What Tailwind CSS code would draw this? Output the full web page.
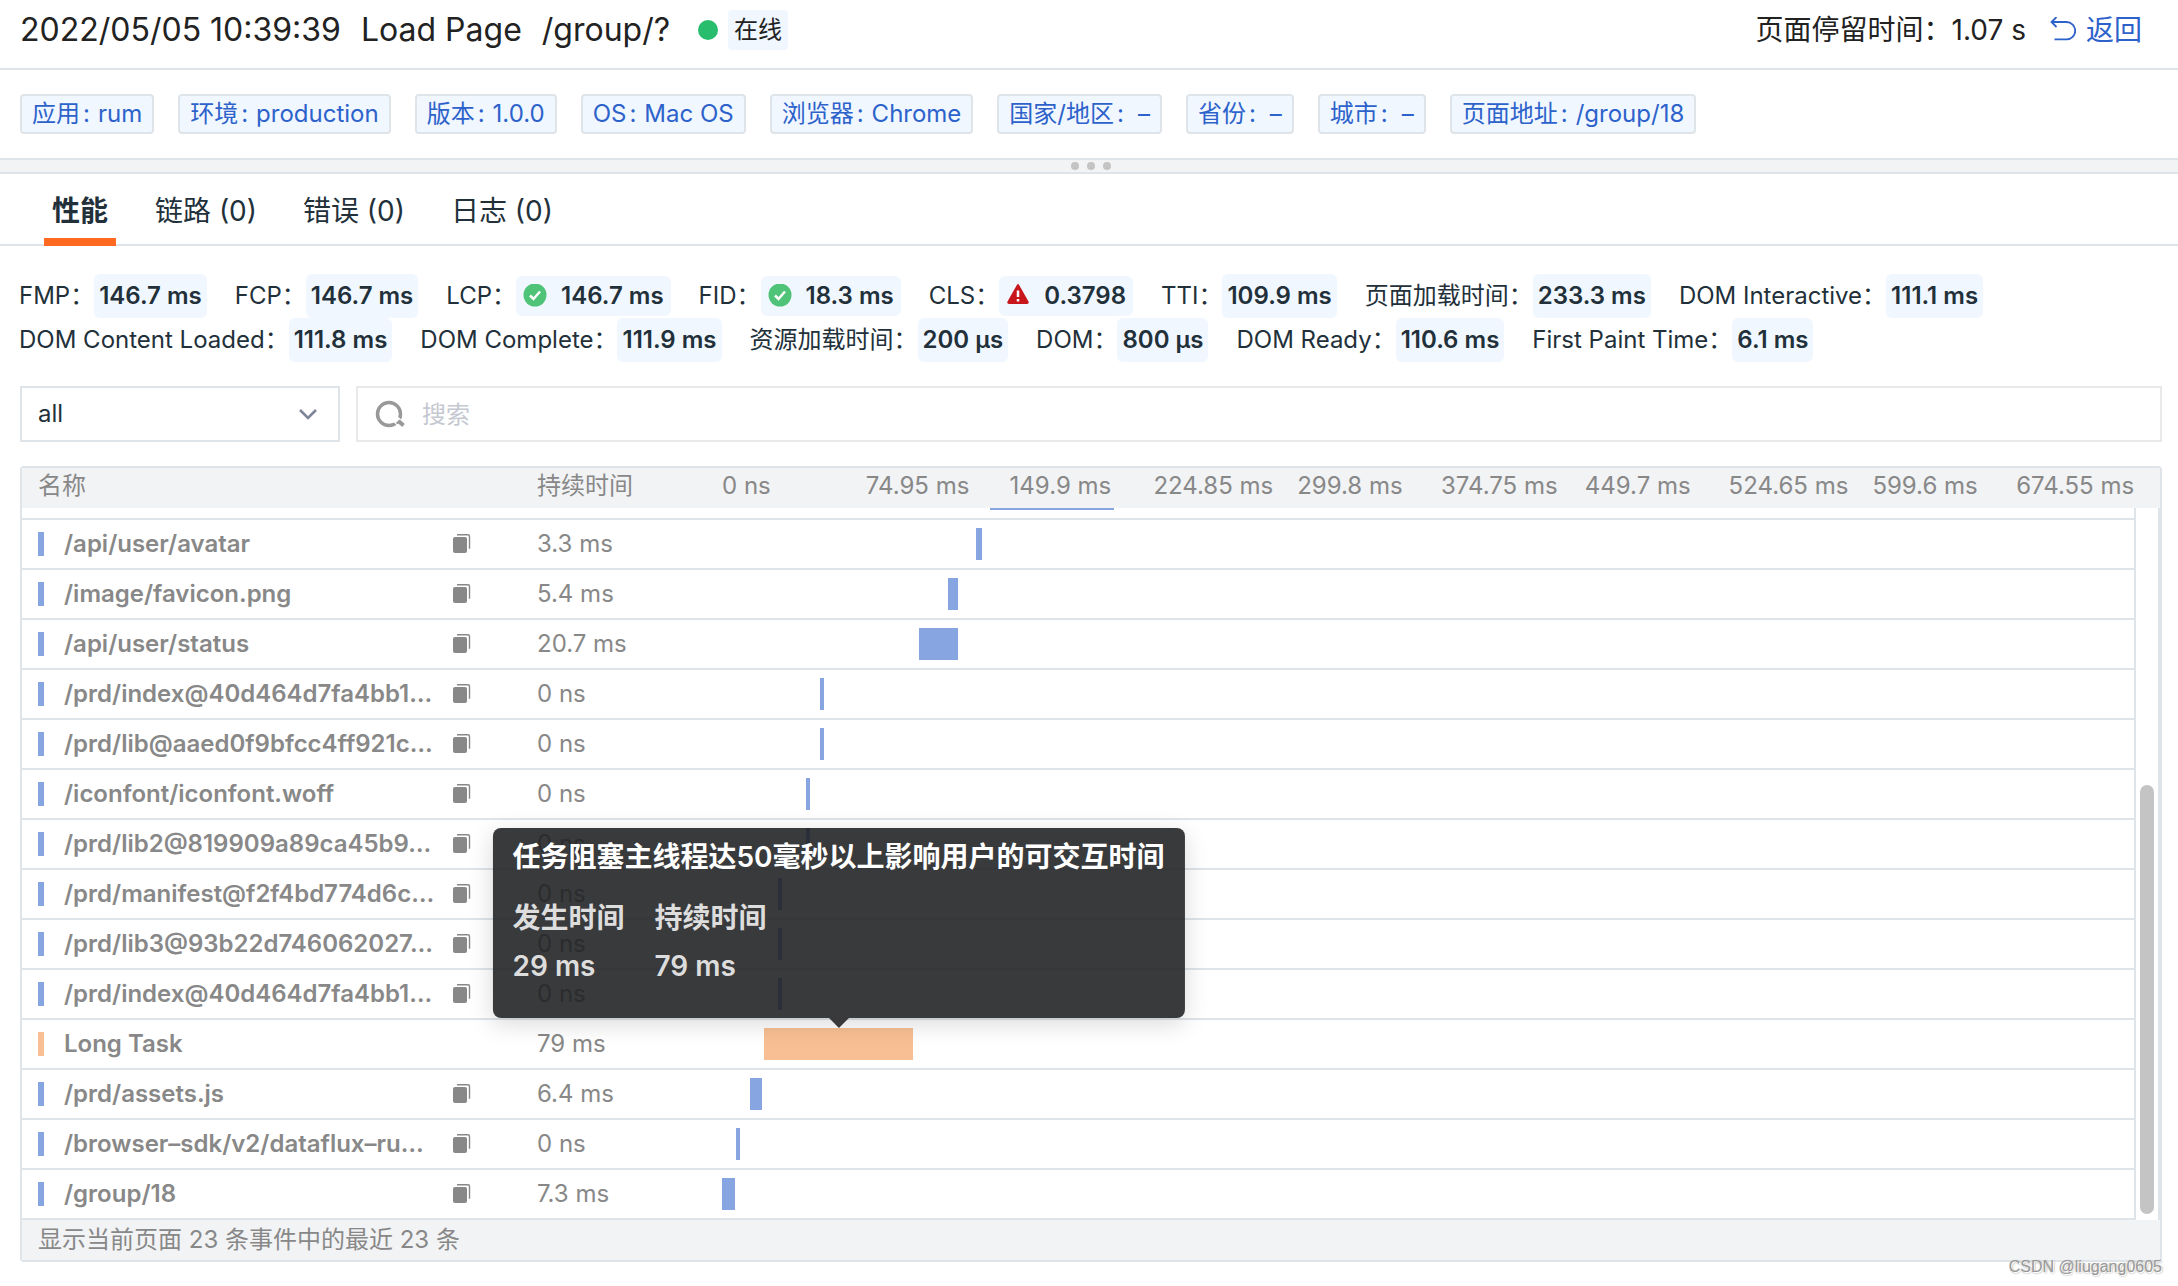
<!DOCTYPE html>
<html lang="zh">
<head>
<meta charset="utf-8">
<meta name="viewport" content="width=device-width, initial-scale=1">
<title>Load Page /group/?</title>
<script src="https://cdn.jsdelivr.net/npm/@tailwindcss/browser@4"></script>
</head>
<body class="min-h-screen bg-white font-[Inter,'Noto_Sans_CJK_SC',sans-serif] text-[24px] leading-8 text-[#22303a]">

<header class="flex h-[70px] items-center justify-between border-b-2 border-[#dfe4e9] pb-2 pr-9 pl-5 text-[#222]">
  <div class="flex items-center">
    <h1 class="flex gap-5 text-[32px] leading-10 whitespace-nowrap"><span>2022/05/05 10:39:39</span><span>Load Page</span><span>/group/?</span></h1>
    <span class="ml-7 size-5 rounded-full bg-[#27bd6c]"></span>
    <span class="ml-[10px] rounded bg-[#f0f7ff] px-[6px] py-1">在线</span>
  </div>
  <div class="flex items-center text-[28px] whitespace-nowrap">
    <span>页面停留时间：1.07 s</span>
    <a href="#" class="ml-6 flex items-center gap-[10px] text-[#2d62cb]">
      <svg class="size-[26px]" viewBox="0 0 26 26" fill="none" stroke="currentColor" stroke-width="1.8"><path d="M6.5 0 1.500 5l5 5M1.500 5h15a8.700 8.700 0 0 1 0 17.400H4.500"/></svg>
      返回
    </a>
  </div>
</header>

<ul id="tags" class="flex h-[88px] items-center gap-6 px-5 whitespace-nowrap text-[#2d62cb]"></ul>

<div class="flex h-4 items-center justify-center gap-2 border-y-2 border-[#dfe4e9] bg-[#f2f3f5] pl-1">
  <i class="size-2 rounded-full bg-[#c4c4c4]"></i><i class="size-2 rounded-full bg-[#c4c4c4]"></i><i class="size-2 rounded-full bg-[#c4c4c4]"></i>
</div>

<nav class="flex h-[72px] gap-8 border-b-2 border-[#dfe4e9] px-11 text-[28px] whitespace-nowrap">
  <button class="-mb-[2px] border-b-8 border-[#ff6a20] px-2 pt-[10px] font-bold">性能</button>
  <button class="px-[7px] pt-1">链路 (0)</button>
  <button class="px-[7px] pt-1">错误 (0)</button>
  <button class="px-[7px] pt-1">日志 (0)</button>
</nav>

<main class="relative pt-7 pr-4 pl-5">
  <dl id="metrics" class="-ml-px flex flex-wrap gap-x-7 whitespace-nowrap"></dl>

  <div class="mt-6 flex h-14 gap-4">
    <div class="relative w-80">
      <select aria-label="资源类型" class="h-full w-full appearance-none border-2 border-[#dfe4e9] bg-white pl-4"><option>all</option></select>
      <svg class="pointer-events-none absolute top-[22px] right-[22px] h-3 w-5" viewBox="0 0 20 12" fill="none" stroke="#7f8699" stroke-width="2.600"><path d="M2 2l8 8 8-8"/></svg>
    </div>
    <label class="flex flex-1 items-center border-2 border-[#e8e9eb] pl-4">
      <svg class="size-8" viewBox="0 0 32 32" fill="none" stroke="#999"><circle cx="15" cy="16" r="11.500" stroke-width="3.500"/><path d="M22 21.500l6 6" stroke="#fff" stroke-width="7"/><path d="M22.500 25.500q2-1 3-3" stroke-width="2"/><path d="M24.500 23l5 4.500" stroke-width="4"/></svg>
      <input type="text" aria-label="搜索" placeholder="搜索" class="ml-4 h-full flex-1 outline-none placeholder:text-[#c5c8d0]">
    </label>
  </div>

  <div class="relative mt-6 rounded border-2 border-[#dfe4e9] text-[#888]">
    <table class="block w-full">
      <thead class="block bg-[#f2f3f5]">
        <tr id="axis" class="flex h-10 items-center pb-1 text-left whitespace-nowrap">
          <th class="w-[515px] pl-4 font-normal">名称</th>
          <th class="w-[185px] font-normal">持续时间</th>
        </tr>
      </thead>
      <tbody id="rows" class="block border-r-2 border-[#dfe4e9] pr-[22px]">
        <tr class="flex h-3 overflow-hidden border-r-2 border-b-2 border-[#dfe4e9]">
          <td class="w-[700px]"></td>
          <td class="relative flex-1"><span class="absolute top-0 h-[2px] bg-[#87a6e1]" style="left:18.980%;width:8.780%"></span></td>
        </tr>
      </tbody>
      <tfoot class="block bg-[#f2f3f5]">
        <tr class="flex h-10 items-center"><td class="pl-4">显示当前页面 23 条事件中的最近 23 条</td></tr>
      </tfoot>
    </table>
    <span class="absolute right-[6px] bottom-[46px] h-[429px] w-[14px] rounded-full bg-[#c4c4c4]"></span>
  </div>
  <span class="absolute right-4 -bottom-[17px] font-['Liberation_Sans',sans-serif] text-[16px] leading-6 text-[#999] [text-shadow:1px_1px_0_#fff,1px_1px_2px_#777]">CSDN @liugang0605</span>
</main>

<script>
const tags = [['应用', 'rum'], ['环境', 'production'], ['版本', '1.0.0'], ['OS', 'Mac OS'], ['浏览器', 'Chrome'], ['国家/地区', '–'], ['省份', '–'], ['城市', '–'], ['页面地址', '/group/18']];
document.getElementById('tags').innerHTML = tags.map(([k, v]) =>
  `<li class="flex h-10 items-center rounded border-2 border-[#dfe4e9] bg-[#f0f7ff] px-[10px]">${k}<span class="${v === '–' ? 'mr-[14px]' : 'mr-2'} ml-[3px]">:</span><span>${v}</span></li>`).join('');

const icons = {
  ok: '<svg class="mr-[14px] size-6" viewBox="0 0 24 24"><circle cx="12" cy="11" r="11.500" fill="#4fc377"/><path d="M7 11.500l3.500 3.500 6.500-7.500" fill="none" stroke="#fff" stroke-width="2.500"/></svg>',
  bad: '<svg class="mr-[14px] size-6" viewBox="0 0 24 24"><path d="M11 .800q1-1.600 2 0l9.500 16.700q.800 2.500-1.500 2.500H3q-2.300 0-1.500-2.500z" fill="#c8161d"/><path d="M12 6.500v6.500M12 15v2.500" stroke="#fff" stroke-width="2.500"/></svg>'
};
const metrics = [['FMP', '146.7 ms'], ['FCP', '146.7 ms'], ['LCP', '146.7 ms', 'ok'], ['FID', '18.3 ms', 'ok'], ['CLS', '0.3798', 'bad'], ['TTI', '109.9 ms'], ['页面加载时间', '233.3 ms'], ['DOM Interactive', '111.1 ms'], ['DOM Content Loaded', '111.8 ms'], ['DOM Complete', '111.9 ms'], ['资源加载时间', '200 µs'], ['DOM', '800 µs'], ['DOM Ready', '110.6 ms'], ['First Paint Time', '6.1 ms']];
document.getElementById('metrics').innerHTML = metrics.map(([k, v, s]) =>
  `<div class="flex h-11 items-center"><dt>${k}：</dt><dd class="flex ${s ? 'h-10 px-[7px]' : 'h-11 px-[5px]'} items-center rounded-md bg-[#f0f7ff] font-semibold">${s ? icons[s] : ''}${v}</dd></div>`).join('');

document.getElementById('axis').insertAdjacentHTML('beforeend',
  ['0 ns', '74.95 ms', '149.9 ms', '224.85 ms', '299.8 ms', '374.75 ms', '449.7 ms', '524.65 ms', '599.6 ms', '674.55 ms']
    .map(t => `<th class="w-0 flex-1 font-normal">${t}</th>`).join(''));

const tip = `<div role="tooltip" class="absolute bottom-full left-1/2 z-10 mb-[10px] w-max -translate-x-1/2 rounded-lg bg-[#1e1f21]/88 px-5 pt-2 pb-8 text-[28px] font-semibold text-[#ddd] shadow-[0_6px_24px_rgba(0,0,0,0.15)]">
  <p class="leading-[42px] text-white">任务阻塞主线程达50毫秒以上影响用户的可交互时间</p>
  <div class="mt-5 flex gap-[30px] leading-10">
    <dl><dt>发生时间</dt><dd class="mt-2">29 ms</dd></dl>
    <dl><dt>持续时间</dt><dd class="mt-2">79 ms</dd></dl>
  </div>
  <svg class="absolute top-full left-1/2 h-[10px] w-5 -translate-x-1/2" viewBox="0 0 20 10"><path d="M0 0h20L10 10z" fill="#39393b"/></svg>
</div>`;
const copy = '<button aria-label="复制" class="block"><svg class="h-5 w-[18px]" viewBox="0 0 18 20"><rect x="0" y="3" width="14" height="16" rx="2" fill="#888"/><path d="M4 .800h11q1.500 0 1.500 1.500v12.500" fill="none" stroke="#888" stroke-width="1.400"/></svg></button>';
// name, duration, bar start %, bar width %
const rows = [
  ['/api/user/avatar', '3.3 ms', 17.99, 0.43], ['/image/favicon.png', '5.4 ms', 16.01, 0.71], ['/api/user/status', '20.7 ms', 13.95, 2.76],
  ['/prd/index@40d464d7fa4bb1…', '0 ns', 6.95, 0.28], ['/prd/lib@aaed0f9bfcc4ff921c…', '0 ns', 6.95, 0.28], ['/iconfont/iconfont.woff', '0 ns', 5.95, 0.28],
  ['/prd/lib2@819909a89ca45b9…', '0 ns', 5.95, 0.28], ['/prd/manifest@f2f4bd774d6c…', '0 ns', 3.97, 0.28], ['/prd/lib3@93b22d746062027…', '0 ns', 3.97, 0.28],
  ['/prd/index@40d464d7fa4bb1…', '0 ns', 3.97, 0.28], ['Long Task', '79 ms', 2.98, 10.55, true], ['/prd/assets.js', '6.4 ms', 1.98, 0.85],
  ['/browser–sdk/v2/dataflux–ru…', '0 ns', 0.99, 0.28], ['/group/18', '7.3 ms', 0, 0.92]
];
document.getElementById('rows').insertAdjacentHTML('beforeend', rows.map(([n, d, x, w, long]) => {
  const color = long ? 'bg-[#f8bf94]' : 'bg-[#87a6e1]';
  return `<tr class="flex h-[50px] items-center border-r-2 border-b-2 border-[#dfe4e9] whitespace-nowrap">
    <td class="flex w-[515px] items-center pl-4"><i class="mr-5 h-6 w-[6px] ${color}"></i><span class="w-[389px] font-semibold">${n}</span>${long ? '' : copy}</td>
    <td class="w-[185px]">${d}</td>
    <td class="relative h-8 flex-1"><div class="absolute top-0 h-8 ${color}" style="left:${x}%;width:${w}%">${long ? tip : ''}</div></td></tr>`;
}).join(''));
</script>
</body>
</html>
